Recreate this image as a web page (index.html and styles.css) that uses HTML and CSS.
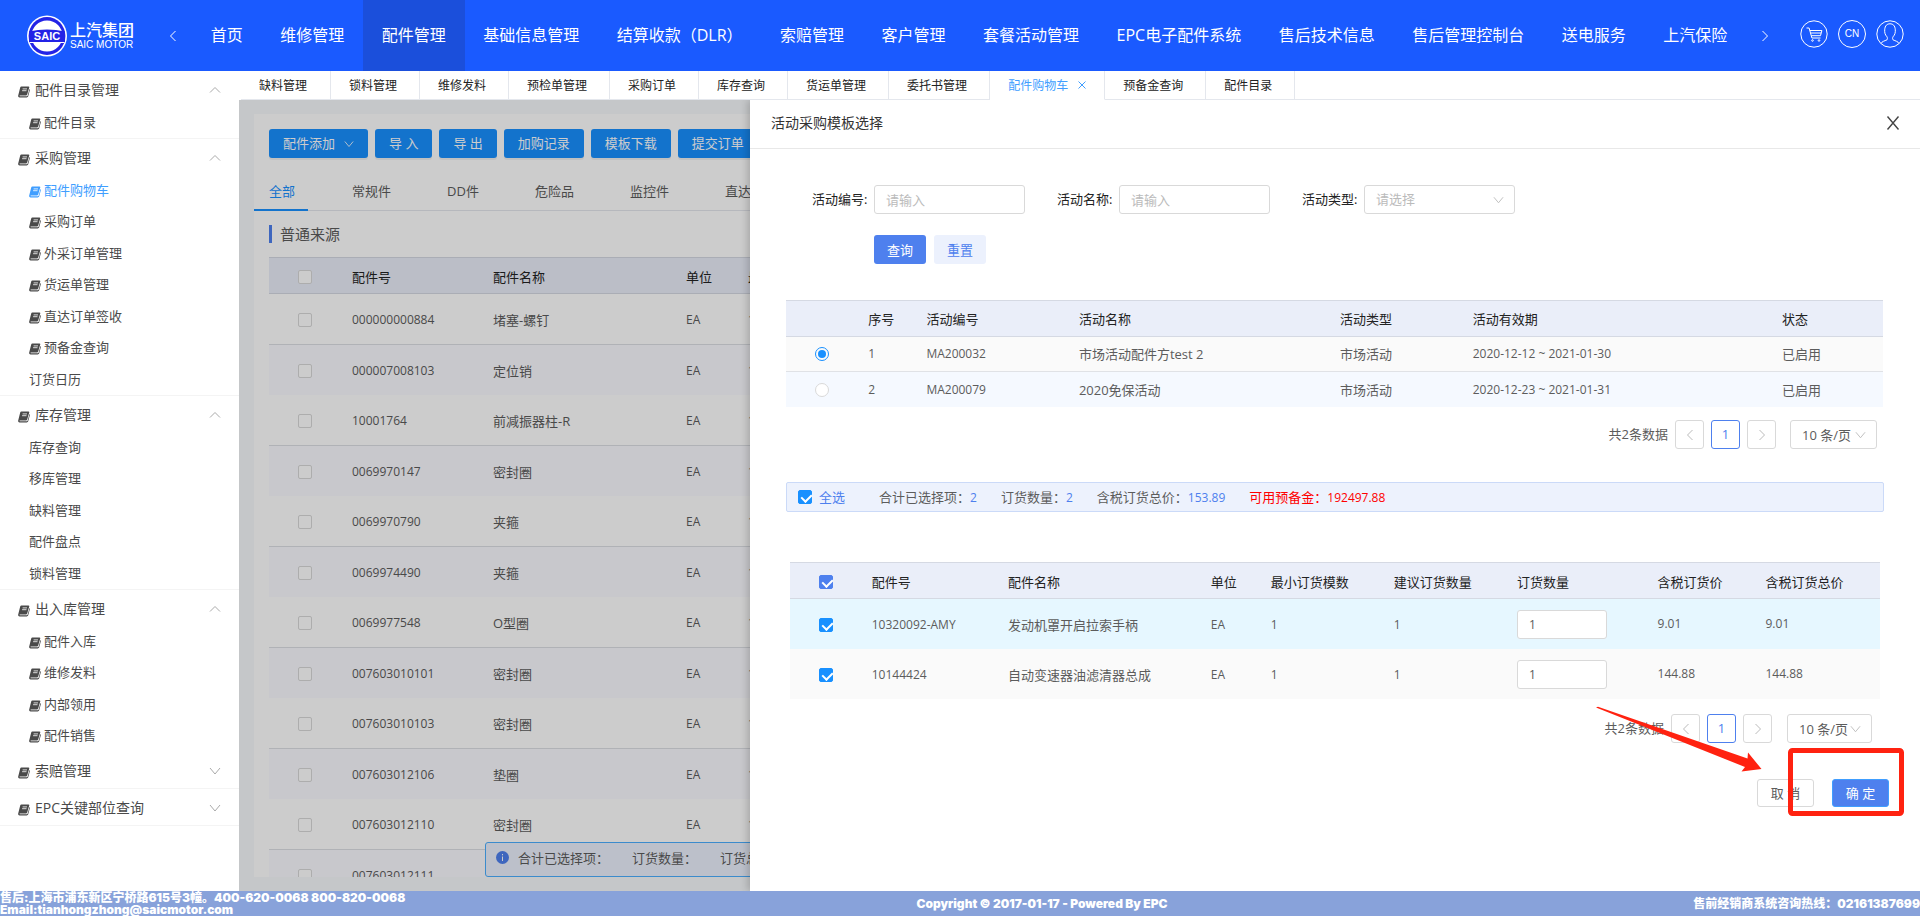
FILE: index.html
```html
<!DOCTYPE html>
<html lang="zh-CN">
<head>
<meta charset="utf-8">
<title>配件购物车</title>
<link rel="stylesheet" href="styles.css">
</head>
<body>
<svg class="defs" aria-hidden="true">
  <symbol id="book" viewBox="0 0 12 12"><path fill="currentColor" d="M3.4 0.4h7.1c.6 0 .9.4.8.9L9.2 8.6c-.1.5-.5.8-1 .8H1.9c-.6 0-.6.9 0 .9h7c.3 0 .6-.2.7-.5l1.9-6.7c.4.2.5.6.4 1l-1.7 6.2c-.2.7-.8 1.2-1.5 1.2H1.6C.5 11.500-.1 10.500.2 9.500L2.200 1.400c.1-.6.6-1 1.200-1z"/><path stroke="#fff" stroke-width=".8" d="M4.600 2.900h4.400M4.100 4.700h4.400"/></symbol>
  <symbol id="up" viewBox="0 0 12 8"><path d="M1 6.500 6 1.500l5 5" fill="none" stroke="currentColor"/></symbol>
  <symbol id="down" viewBox="0 0 12 8"><path d="M1 1l5 6 5-6" fill="none" stroke="currentColor"/></symbol>
  <symbol id="left" viewBox="0 0 8 12"><path d="M6.500 1l-5 5 5 5" fill="none" stroke="currentColor"/></symbol>
  <symbol id="right" viewBox="0 0 8 12"><path d="M1.500 1l5 5-5 5" fill="none" stroke="currentColor"/></symbol>
</svg>

<header class="header">
  <a class="logo" href="#" aria-label="SAIC MOTOR">
    <svg width="40" height="42" viewBox="0 0 40 42">
      <ellipse cx="20" cy="21" rx="20" ry="20.500" fill="#fff"/>
      <ellipse cx="20" cy="21" rx="18.400" ry="19" fill="#2323e6"/>
      <ellipse cx="20" cy="21" rx="15.500" ry="15.500" fill="#fff"/>
      <path d="M2 16.500Q20 12.500 38 16.500V27H2z" fill="#2323e6"/>
      <path d="M3 27.500h34" stroke="#fff" stroke-width="1.200"/>
      <text x="20" y="25" text-anchor="middle" class="logo-mark">SAIC</text>
    </svg>
    <span class="logo-text"><span class="logo-cn">上汽集团</span><span class="logo-en">SAIC MOTOR</span></span>
  </a>
  <button class="nav-arrow" aria-label="向左"><svg width="8" height="12"><use href="#left"/></svg></button>
  <nav class="nav">
    <a href="#">首页</a><a href="#">维修管理</a><a href="#" class="active">配件管理</a><a href="#">基础信息管理</a><a href="#">结算收款（DLR）</a><a href="#">索赔管理</a><a href="#">客户管理</a><a href="#">套餐活动管理</a><a href="#">EPC电子配件系统</a><a href="#">售后技术信息</a><a href="#">售后管理控制台</a><a href="#">送电服务</a><a href="#">上汽保险</a>
  </nav>
  <button class="nav-arrow next" aria-label="向右"><svg width="8" height="12"><use href="#right"/></svg></button>
  <div class="tools">
    <button aria-label="购物车"><svg width="28" height="28" viewBox="0 0 28 28" fill="none" stroke="#fff"><circle cx="14" cy="14" r="13.200"/><path d="M6.500 8h2.600l2.800 10h8.600M9.900 10.500h12l-1.400 5.200h-9.200M10.600 13h10.400"/><circle cx="12.500" cy="20.500" r=".8"/><circle cx="19" cy="20.500" r=".8"/></svg></button>
    <button class="lang">CN</button>
    <button aria-label="用户"><svg width="28" height="28" viewBox="0 0 28 28" fill="none" stroke="#fff"><circle cx="14" cy="14" r="13.200"/><path d="M5 23.500c.8-2 3.500-2.500 6-3.700.6-.4.500-2.300 0-3-2-2-2.500-4.500-2.300-7C9 5.500 11 3.800 14 3.800s5 1.700 5.300 6c.2 2.500-.3 5-2.300 7-.5.700-.6 2.600 0 3 2.500 1.200 5.200 1.700 6 3.700"/></svg></button>
  </div>
</header>

<div class="main">
  <aside class="sidebar">
    <section class="group">
      <button class="group-title"><svg class="book"><use href="#book"/></svg>配件目录管理<svg class="chev"><use href="#up"/></svg></button>
      <ul><li><a href="#"><svg class="book"><use href="#book"/></svg>配件目录</a></li></ul>
    </section>
    <section class="group">
      <button class="group-title"><svg class="book"><use href="#book"/></svg>采购管理<svg class="chev"><use href="#up"/></svg></button>
      <ul>
        <li><a href="#" class="current"><svg class="book"><use href="#book"/></svg>配件购物车</a></li>
        <li><a href="#"><svg class="book"><use href="#book"/></svg>采购订单</a></li>
        <li><a href="#"><svg class="book"><use href="#book"/></svg>外采订单管理</a></li>
        <li><a href="#"><svg class="book"><use href="#book"/></svg>货运单管理</a></li>
        <li><a href="#"><svg class="book"><use href="#book"/></svg>直达订单签收</a></li>
        <li><a href="#"><svg class="book"><use href="#book"/></svg>预备金查询</a></li>
        <li><a href="#">订货日历</a></li>
      </ul>
    </section>
    <section class="group">
      <button class="group-title"><svg class="book"><use href="#book"/></svg>库存管理<svg class="chev"><use href="#up"/></svg></button>
      <ul>
        <li><a href="#">库存查询</a></li>
        <li><a href="#">移库管理</a></li>
        <li><a href="#">缺料管理</a></li>
        <li><a href="#">配件盘点</a></li>
        <li><a href="#">锁料管理</a></li>
      </ul>
    </section>
    <section class="group open-end">
      <button class="group-title"><svg class="book"><use href="#book"/></svg>出入库管理<svg class="chev"><use href="#up"/></svg></button>
      <ul>
        <li><a href="#"><svg class="book"><use href="#book"/></svg>配件入库</a></li>
        <li><a href="#"><svg class="book"><use href="#book"/></svg>维修发料</a></li>
        <li><a href="#"><svg class="book"><use href="#book"/></svg>内部领用</a></li>
        <li><a href="#"><svg class="book"><use href="#book"/></svg>配件销售</a></li>
      </ul>
    </section>
    <section class="group"><button class="group-title"><svg class="book"><use href="#book"/></svg>索赔管理<svg class="chev"><use href="#down"/></svg></button></section>
    <section class="group"><button class="group-title"><svg class="book"><use href="#book"/></svg>EPC关键部位查询<svg class="chev"><use href="#down"/></svg></button></section>
  </aside>

  <div class="content">
    <nav class="tabs">
      <a href="#">缺料管理</a><a href="#">锁料管理</a><a href="#">维修发料</a><a href="#">预检单管理</a><a href="#">采购订单</a><a href="#">库存查询</a><a href="#">货运单管理</a><a href="#">委托书管理</a><a href="#" class="active">配件购物车<svg width="8" height="8" viewBox="0 0 8 8"><path d="M.5.5l7 7M7.500.5l-7 7" stroke="currentColor"/></svg></a><a href="#">预备金查询</a><a href="#">配件目录</a>
    </nav>
    <div class="workspace">
      <div class="panel">
        <div class="toolbar">
          <button class="primary">配件添加<svg width="10" height="8" viewBox="0 0 12 8"><use href="#down"/></svg></button>
          <button class="primary">导 入</button>
          <button class="primary">导 出</button>
          <button class="primary">加购记录</button>
          <button class="primary">模板下载</button>
          <button class="primary">提交订单</button>
        </div>
        <div class="subtabs">
          <a href="#" class="active">全部</a><a href="#">常规件</a><a href="#">DD件</a><a href="#">危险品</a><a href="#">监控件</a><a href="#">直达件</a>
        </div>
        <h2 class="source">普通来源</h2>
        <table class="parts">
          <colgroup><col class="p-check"><col class="p-no"><col class="p-name"><col class="p-unit"><col></colgroup>
          <thead><tr><th><input type="checkbox" aria-label="全选"></th><th>配件号</th><th>配件名称</th><th>单位</th><th>最小订货模数</th></tr></thead>
          <tbody>
            <tr><td><input type="checkbox" aria-label="选择"></td><td class="num">000000000884</td><td>堵塞-螺钉</td><td class="num">EA</td><td class="num">1</td></tr>
            <tr><td><input type="checkbox" aria-label="选择"></td><td class="num">000007008103</td><td>定位销</td><td class="num">EA</td><td class="num">1</td></tr>
            <tr><td><input type="checkbox" aria-label="选择"></td><td class="num">10001764</td><td>前减振器柱-R</td><td class="num">EA</td><td class="num">1</td></tr>
            <tr><td><input type="checkbox" aria-label="选择"></td><td class="num">0069970147</td><td>密封圈</td><td class="num">EA</td><td class="num">1</td></tr>
            <tr><td><input type="checkbox" aria-label="选择"></td><td class="num">0069970790</td><td>夹箍</td><td class="num">EA</td><td class="num">1</td></tr>
            <tr><td><input type="checkbox" aria-label="选择"></td><td class="num">0069974490</td><td>夹箍</td><td class="num">EA</td><td class="num">1</td></tr>
            <tr><td><input type="checkbox" aria-label="选择"></td><td class="num">0069977548</td><td>O型圈</td><td class="num">EA</td><td class="num">1</td></tr>
            <tr><td><input type="checkbox" aria-label="选择"></td><td class="num">007603010101</td><td>密封圈</td><td class="num">EA</td><td class="num">1</td></tr>
            <tr><td><input type="checkbox" aria-label="选择"></td><td class="num">007603010103</td><td>密封圈</td><td class="num">EA</td><td class="num">1</td></tr>
            <tr><td><input type="checkbox" aria-label="选择"></td><td class="num">007603012106</td><td>垫圈</td><td class="num">EA</td><td class="num">1</td></tr>
            <tr><td><input type="checkbox" aria-label="选择"></td><td class="num">007603012110</td><td>密封圈</td><td class="num">EA</td><td class="num">1</td></tr>
            <tr><td><input type="checkbox" aria-label="选择"></td><td class="num">007603012111</td><td></td><td></td><td></td></tr>
          </tbody>
        </table>
        <div class="float-bar">
          <svg width="13" height="13" viewBox="0 0 13 13"><circle cx="6.500" cy="6.500" r="6.500" fill="#4e80ee"/><path d="M6.500 5.500v4.500M6.500 3v1.300" stroke="#fff"/></svg>
          <span>合计已选择项：</span><span>订货数量：</span><span>订货总价：</span>
        </div>
      </div>
      <div class="scrim"></div>

      <section class="drawer" role="dialog" aria-labelledby="drawer-title">
        <div class="drawer-head">
          <h1 id="drawer-title">活动采购模板选择</h1>
          <button aria-label="关闭"><svg width="14" height="14" viewBox="0 0 14 14"><path d="M1.500 .5l11 13M12.500 .5l-11 13" stroke="#444" stroke-width="1.400"/></svg></button>
        </div>
        <form class="search">
          <div class="fields">
            <label for="f-no">活动编号:</label><input id="f-no" type="text" placeholder="请输入">
            <label for="f-name">活动名称:</label><input id="f-name" type="text" placeholder="请输入">
            <label for="f-type">活动类型:</label>
            <div class="select"><select id="f-type"><option>请选择</option></select><svg><use href="#down"/></svg></div>
          </div>
          <div class="search-actions"><button type="button" class="blue">查询</button><button type="button" class="soft">重置</button></div>
        </form>

        <div class="block">
          <table class="grid acts">
            <colgroup><col class="a1"><col class="a2"><col class="a3"><col class="a4"><col class="a5"><col class="a6"><col></colgroup>
            <thead><tr><th></th><th>序号</th><th>活动编号</th><th>活动名称</th><th>活动类型</th><th>活动有效期</th><th>状态</th></tr></thead>
            <tbody>
              <tr><td><input type="radio" name="act" aria-label="MA200032" checked></td><td class="num">1</td><td class="num">MA200032</td><td>市场活动配件方test 2</td><td>市场活动</td><td class="num">2020-12-12 ~ 2021-01-30</td><td>已启用</td></tr>
              <tr><td><input type="radio" name="act" aria-label="MA200079"></td><td class="num">2</td><td class="num">MA200079</td><td>2020免保活动</td><td>市场活动</td><td class="num">2020-12-23 ~ 2021-01-31</td><td>已启用</td></tr>
            </tbody>
          </table>
          <div class="pager">
            <span>共2条数据</span>
            <button aria-label="上一页"><svg width="8" height="12"><use href="#left"/></svg></button>
            <button class="on">1</button>
            <button aria-label="下一页"><svg width="8" height="12"><use href="#right"/></svg></button>
            <div class="select size"><select aria-label="每页条数"><option>10 条/页</option></select><svg><use href="#down"/></svg></div>
          </div>
        </div>

        <div class="summary">
          <label><input type="checkbox" checked>全选</label>
          <span>合计已选择项：<b>2</b></span>
          <span>订货数量：<b>2</b></span>
          <span>含税订货总价：<b>153.89</b></span>
          <span class="red">可用预备金：<b>192497.88</b></span>
        </div>

        <div class="block inset">
          <table class="grid items">
            <colgroup><col class="i1"><col class="i2"><col class="i3"><col class="i4"><col class="i5"><col class="i6"><col class="i7"><col class="i8"><col></colgroup>
            <thead><tr><th><input type="checkbox" class="indigo" aria-label="全选" checked></th><th>配件号</th><th>配件名称</th><th>单位</th><th>最小订货模数</th><th>建议订货数量</th><th>订货数量</th><th>含税订货价</th><th>含税订货总价</th></tr></thead>
            <tbody>
              <tr class="picked"><td><input type="checkbox" aria-label="选择" checked></td><td class="num">10320092-AMY</td><td>发动机罩开启拉索手柄</td><td class="num">EA</td><td class="num">1</td><td class="num">1</td><td><input type="text" class="qty" aria-label="订货数量" value="1"></td><td class="num">9.01</td><td class="num">9.01</td></tr>
              <tr><td><input type="checkbox" aria-label="选择" checked></td><td class="num">10144424</td><td>自动变速器油滤清器总成</td><td class="num">EA</td><td class="num">1</td><td class="num">1</td><td><input type="text" class="qty" aria-label="订货数量" value="1"></td><td class="num">144.88</td><td class="num">144.88</td></tr>
            </tbody>
          </table>
          <div class="pager">
            <span>共2条数据</span>
            <button aria-label="上一页"><svg width="8" height="12"><use href="#left"/></svg></button>
            <button class="on">1</button>
            <button aria-label="下一页"><svg width="8" height="12"><use href="#right"/></svg></button>
            <div class="select size"><select aria-label="每页条数"><option>10 条/页</option></select><svg><use href="#down"/></svg></div>
          </div>
        </div>

        <div class="drawer-actions">
          <button class="plain">取 消</button>
          <button class="blue ok">确 定</button>
          <svg class="marker" width="310" height="112" viewBox="0 0 310 112" aria-hidden="true">
            <path d="M0 1.500 2 .8 151.500 52.500 152 46.500 165.500 63 145.500 65.500 149 61z" fill="#ff2210"/>
            <rect x="194.500" y="44.500" width="111" height="63" rx="2" fill="none" stroke="#ff2210" stroke-width="5"/>
          </svg>
        </div>
      </section>
    </div>
  </div>
</div>

<footer class="footer">
  <div>售后:上海市浦东新区宁桥路615号3幢。400-620-0068 800-820-0068<br>Email:tianhongzhong@saicmotor.com</div>
  <div class="copy">Copyright © 2017-01-17 - Powered By EPC</div>
  <div class="hot">售前经销商系统咨询热线：02161387699</div>
</footer>
</body>
</html>
```
FILE: styles.css
```css
* { box-sizing: border-box; }
body {
  margin: 0;
  height: 100vh;
  display: flex;
  flex-direction: column;
  overflow: hidden;
  font: 13px/20px "Open Sans", "Noto Sans CJK SC", sans-serif;
  color: #5c5c5c;
}
a { color: inherit; text-decoration: none; }
button, input, select { font: inherit; color: inherit; margin: 0; }
button { padding: 0; border: 0; background: none; cursor: pointer; white-space: nowrap; }
svg { flex: none; }
.defs { position: absolute; width: 0; height: 0; }
.num { font-size: 12px; }

/* Header */
.header {
  flex: none;
  height: 71px;
  display: flex;
  align-items: center;
  background: #1a5aff;
  color: #fff;
}
.logo { display: flex; align-items: center; gap: 3px; width: 141px; padding-left: 27px; }
.logo-mark { font: bold 11px "Liberation Sans", sans-serif; fill: #fff; }
.logo-text { display: flex; flex-direction: column; white-space: nowrap; }
.logo-cn { font-size: 16px; line-height: 18px; font-weight: 500; }
.logo-en { font: 10px/12px "Liberation Sans", sans-serif; }
.nav-arrow { width: 51px; padding-left: 12px; height: 71px; display: flex; align-items: center; justify-content: center; }
.nav-arrow.next { width: 38px; padding-left: 0; }
.nav { flex: 1; display: flex; height: 71px; font-size: 16px; line-height: 70px; white-space: nowrap; }
.nav a { flex: 1 0 auto; padding: 0 18px; text-align: center; }
.nav a.active { background: #1b4fdb; }
.tools { display: flex; gap: 10px; margin: 0 16px 4px; }
.tools button { width: 28px; height: 28px; display: block; }
.tools .lang { border: 1px solid #fff; border-radius: 50%; font: 10px/26px "Liberation Sans", sans-serif; }

/* Sidebar */
.main { flex: 1; min-height: 0; display: flex; }
.sidebar { flex: none; width: 239px; background: #fff; color: #4a4a4a; }
.group { border-bottom: 1px solid #f4f4f4; }
.open-end { border-bottom: 0; }
.group-title { width: 100%; height: 36px; padding: 2px 18px 0; display: flex; align-items: center; gap: 5px; font-size: 14px; }
.book { width: 12px; height: 12px; margin-top: 4px; }
.chev { width: 12px; height: 8px; margin-left: auto; color: #aaa; }
.group ul { list-style: none; margin: 0; padding: 0; }
.group li { height: 31px; }
.group li:nth-child(even) { height: 32px; }
.group li a { display: flex; align-items: center; gap: 3px; height: 100%; padding: 0 0 2px 29px; }
.group .current { color: #409eff; }

/* Page tabs */
.content { flex: 1; min-width: 0; display: flex; flex-direction: column; }
.tabs { flex: none; height: 29px; display: flex; padding-left: 2px; font-size: 12px; line-height: 29px; color: #222; background: #fff; }
.tabs::after { content: ""; flex: 1; border-bottom: 1px solid #e4e7ed; }
.tabs a { height: 29px; padding: 0 22px 0 18px; border: solid #e4e7ed; border-width: 0 1px 1px 0; white-space: nowrap; }
.tabs a:first-child { padding-right: 23px; }
.tabs a.active { display: flex; align-items: center; gap: 10px; padding: 0 18px; color: #409eff; border-bottom-color: #fff; }

/* Cart page behind the drawer */
.workspace { flex: 1; min-height: 0; position: relative; overflow: hidden; padding: 14px 15px; background: #f7f9fc; }
.panel { height: 100%; position: relative; overflow: hidden; background: #fff; }
.toolbar { display: flex; gap: 7px; padding: 15px 15px 0; }
.primary { height: 29px; padding: 0 14px 2px; border-radius: 3px; background: #1890ff; color: #fff; box-shadow: 0 2px 0 rgba(0, 0, 0, .05); }
.primary svg { margin-left: 9px; }
.subtabs { display: flex; gap: 26px; height: 39px; margin-top: 14px; border-bottom: 1px solid #e4e7ed; line-height: 39px; }
.subtabs a { padding: 0 15px; margin-bottom: -1px; flex: none; }
.subtabs .active { padding: 0 13px 0 15px; margin-right: 3px; color: #1890ff; border-bottom: 2px solid #1890ff; }
.source { margin: 14px 15px; padding-left: 8px; border-left: 3px solid #4e80ee; font-size: 15px; line-height: 18px; font-weight: 400; }
.parts, .grid { border-collapse: separate; border-spacing: 0; table-layout: fixed; width: 100%; }
.parts { margin: 0 15px; }
th, td { padding: 0; text-align: left; font-weight: 400; white-space: nowrap; }
th { height: 37px; background: #eaeef9; color: #222; border: solid #d5d9e3; border-width: 1px 0; }
.parts th, .parts td, .items th, .items td { padding-top: 2px; }
.parts td { height: 50px; }
.parts tbody tr:nth-child(odd) td { height: 51px; border-bottom: 1px solid #dcdfe4; }
.parts tbody tr:nth-child(even) td { background: #fafbff; }
.parts input { margin-left: 29px; }
.p-check { width: 83px; }
.p-no { width: 141px; }
.p-name { width: 193px; }
.p-unit { width: 62px; }
.float-bar {
  position: absolute;
  left: 231px;
  right: 15px;
  bottom: 0;
  height: 35px;
  display: flex;
  align-items: center;
  padding: 0 10px 4px;
  border: 1px solid #4aaeff;
  border-radius: 3px;
  background: #ecf1fd;
}
.float-bar span { margin: 0 14px 0 9px; }
.scrim { position: absolute; inset: 0; background: rgba(0, 0, 0, .2); }

/* Checkboxes and radios */
input[type="checkbox"], input[type="radio"] {
  appearance: none;
  display: block;
  width: 14px;
  height: 14px;
  border: 1px solid #d9d9d9;
  border-radius: 2px;
  background: #fff;
}
input[type="checkbox"]:checked { background: #1890ff; border-color: #1890ff; }
input[type="checkbox"]:checked::after {
  content: "";
  display: block;
  width: 5px;
  height: 8px;
  margin: 1px 0 0 4px;
  border: solid #fff;
  border-width: 0 2px 2px 0;
  transform: rotate(45deg);
}
input.indigo:checked { background: #4e80ee; border-color: #4e80ee; }
input[type="radio"] { border-radius: 50%; }
input[type="radio"]:checked { border-color: #1890ff; padding: 2px; background: #1890ff content-box; }

/* Drawer */
.drawer {
  position: absolute;
  top: 0;
  bottom: 0;
  right: 0;
  left: 511px;
  background: #fff;
  box-shadow: -2px 0 8px rgba(0, 0, 0, .2);
}
.drawer-head { display: flex; align-items: center; justify-content: space-between; height: 49px; padding: 0 20px 2px 21px; border-bottom: 1px solid #e8e8e8; }
.drawer-head h1 { margin: 0; font-size: 14px; font-weight: 400; color: #333; }
.drawer-head svg { display: block; }
.search { padding: 36px 36px 0 62px; }
.fields { display: flex; align-items: center; }
.fields label { width: 62px; padding-bottom: 2px; color: #222; white-space: nowrap; }
.fields input { width: 151px; height: 29px; margin-right: 32px; }
.fields input, .qty, .select select { padding: 0 11px; border: 1px solid #d9d9d9; border-radius: 3px; background: #fff; }
.fields input::placeholder, .fields select { color: #bbb; }
.fields .select { width: 151px; }
.select { position: relative; }
.select select { appearance: none; display: block; width: 100%; height: 29px; }
.fields .select select { padding-bottom: 2px; }
.select svg { position: absolute; right: 11px; top: 11px; width: 11px; height: 8px; color: #bbb; pointer-events: none; }
.search-actions { display: flex; gap: 8px; margin: 21px 0 0 62px; }
.search-actions button { width: 52px; height: 29px; }
.blue { background: #4e80ee; color: #fff; border-radius: 3px; }
.soft { background: #ecf1fd; color: #4e80ee; border-radius: 3px; }
.block { margin: 36px 37px 0 36px; }
.grid td:first-child input, .grid th:first-child input { margin-left: 29px; }
.acts td { height: 35px; background: #fafafa; border-bottom: 1px solid #e0e2e6; }
.acts tr:last-child td { background: #f5f9ff; border-bottom: 0; }
.a1 { width: 7.5%; }
.a2 { width: 5.3%; }
.a3 { width: 13.9%; }
.a4 { width: 23.8%; }
.a5 { width: 12.1%; }
.a6 { width: 28.2%; }
.pager { display: flex; justify-content: flex-end; gap: 7px; padding: 13px 6px 0 0; line-height: 29px; }
.pager button { width: 29px; height: 29px; border: 1px solid #d9d9d9; border-radius: 3px; color: #bbb; display: flex; align-items: center; justify-content: center; }
.pager .on { border-color: #4e80ee; color: #4e80ee; }
.size { width: 87px; margin-left: 7px; }
.summary {
  display: flex;
  align-items: center;
  gap: 24px;
  height: 30px;
  margin: 33px 36px 0;
  padding-left: 11px;
  border: 1px solid #cbdaf8;
  border-radius: 2px;
  background: #edf2fd;
}
.summary label { display: flex; align-items: center; gap: 7px; margin-right: 10px; color: #4e80ee; }
.summary b { font-weight: 400; font-size: 12px; color: #4e80ee; }
.summary .red, .summary .red b { color: #f00; }
.inset { margin: 50px 40px 0; }
.inset .pager { padding: 15px 8px 0 0; }
.inset .size { width: 85px; margin-left: 8px; }
.items td { height: 50px; background: #fafafa; }
.items .picked td { background: #e6f7ff; }
.items td:nth-child(n+7) { padding-top: 0; }
.qty { display: block; width: 90px; height: 29px; font-size: 12px; }
.i1 { width: 7.5%; }
.i2 { width: 12.5%; }
.i3 { width: 18.6%; }
.i4 { width: 5.5%; }
.i5 { width: 11.3%; }
.i6 { width: 11.3%; }
.i7 { width: 12.9%; }
.i8 { width: 9.9%; }
.drawer-actions { position: relative; display: flex; justify-content: flex-end; gap: 18px; margin-top: 36px; padding-right: 31px; }
.drawer-actions button { width: 57px; height: 28px; border: 1px solid #d9d9d9; border-radius: 3px; }
.drawer-actions .ok { border-color: #409eff; }
.marker { position: absolute; right: 14px; bottom: -11px; pointer-events: none; }

/* Footer */
.footer {
  flex: none;
  height: 25px;
  display: flex;
  justify-content: space-between;
  align-items: center;
  background: #88a2da;
  color: #fff;
  font: 900 12px/12px Inter, "Noto Sans CJK SC", sans-serif;
}
.footer > div { flex: 1; white-space: nowrap; }
.footer .copy { text-align: center; padding-left: 164px; }
.footer .hot { text-align: right; }
```
